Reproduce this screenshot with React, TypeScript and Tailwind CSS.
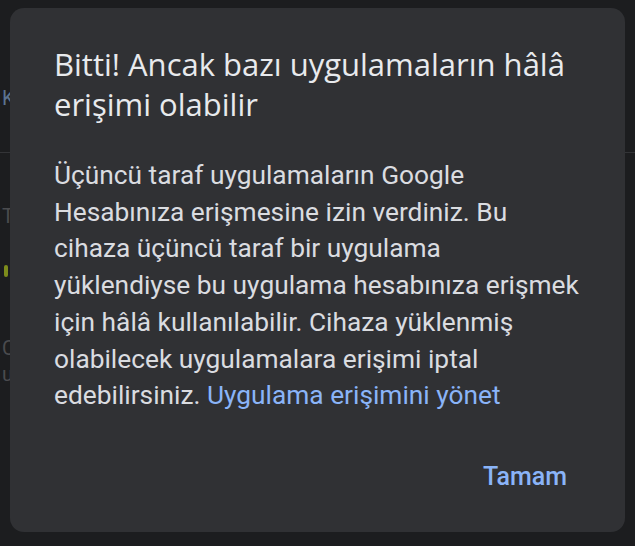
import React from 'react'

const bodyLines = [
  'Üçüncü taraf uygulamaların Google',
  'Hesabınıza erişmesine izin verdiniz. Bu',
  'cihaza üçüncü taraf bir uygulama',
  'yüklendiyse bu uygulama hesabınıza erişmek',
  'için hâlâ kullanılabilir. Cihaza yüklenmiş',
  'olabilecek uygulamalara erişimi iptal',
]

function Backdrop() {
  return (
    <div className="flex flex-col w-full h-full">
      <div className="h-[84px]" />
      <div className="h-[28px] pl-[2px] text-[20px] leading-[28px] text-[#5b7390]">K</div>
      <div className="h-[40px]" />
      <div className="h-px w-full bg-[#333437]" />
      <div className="h-[50px]" />
      <div className="h-[26px] pl-[2px] text-[20px] leading-[26px] text-[#4a4b4e]">T</div>
      <div className="h-[36px]" />
      <div className="ml-[4px] h-[12px] w-[4px] rounded-sm bg-[#7d8c1c]" />
      <div className="h-[58px]" />
      <div className="h-[26px] pl-[2px] text-[20px] leading-[26px] text-[#4a4b4e]">C</div>
      <div className="h-[26px] pl-[2px] text-[20px] leading-[26px] text-[#4a4b4e]">u</div>
    </div>
  )
}

export default function App() {
  return (
    <div
      className="relative w-[635px] h-[546px] overflow-hidden bg-[#1c1d1f]"
      style={{ fontFamily: 'Roboto, "Noto Sans", sans-serif' }}
    >
      <Backdrop />
      <div className="absolute left-[10px] top-[8px] w-[615px] h-[524px] rounded-[14px] bg-[#303134] flex flex-col pl-[44px] pr-[30px] pt-[36px]">
        <h1
          className="text-[31px] leading-[40px] text-[#e8eaed] whitespace-nowrap"
          style={{ fontFamily: '"Open Sans", Roboto, sans-serif' }}
        >
          Bitti! Ancak bazı uygulamaların hâlâ
          <br />
          erişimi olabilir
        </h1>
        <p className="mt-[33px] text-[26.3px] leading-[36.7px] text-[#dadce0] whitespace-nowrap">
          {bodyLines.map((line) => (
            <React.Fragment key={line}>
              {line}
              <br />
            </React.Fragment>
          ))}
          edebilirsiniz. <span className="text-[#8ab4f8]">Uygulama erişimini yönet</span>
        </p>
        <div className="flex justify-end mt-auto mb-[41px]">
          <button className="text-[25px] leading-[28px] font-medium text-[#8ab4f8] pr-[28px]">
            Tamam
          </button>
        </div>
      </div>
    </div>
  )
}
